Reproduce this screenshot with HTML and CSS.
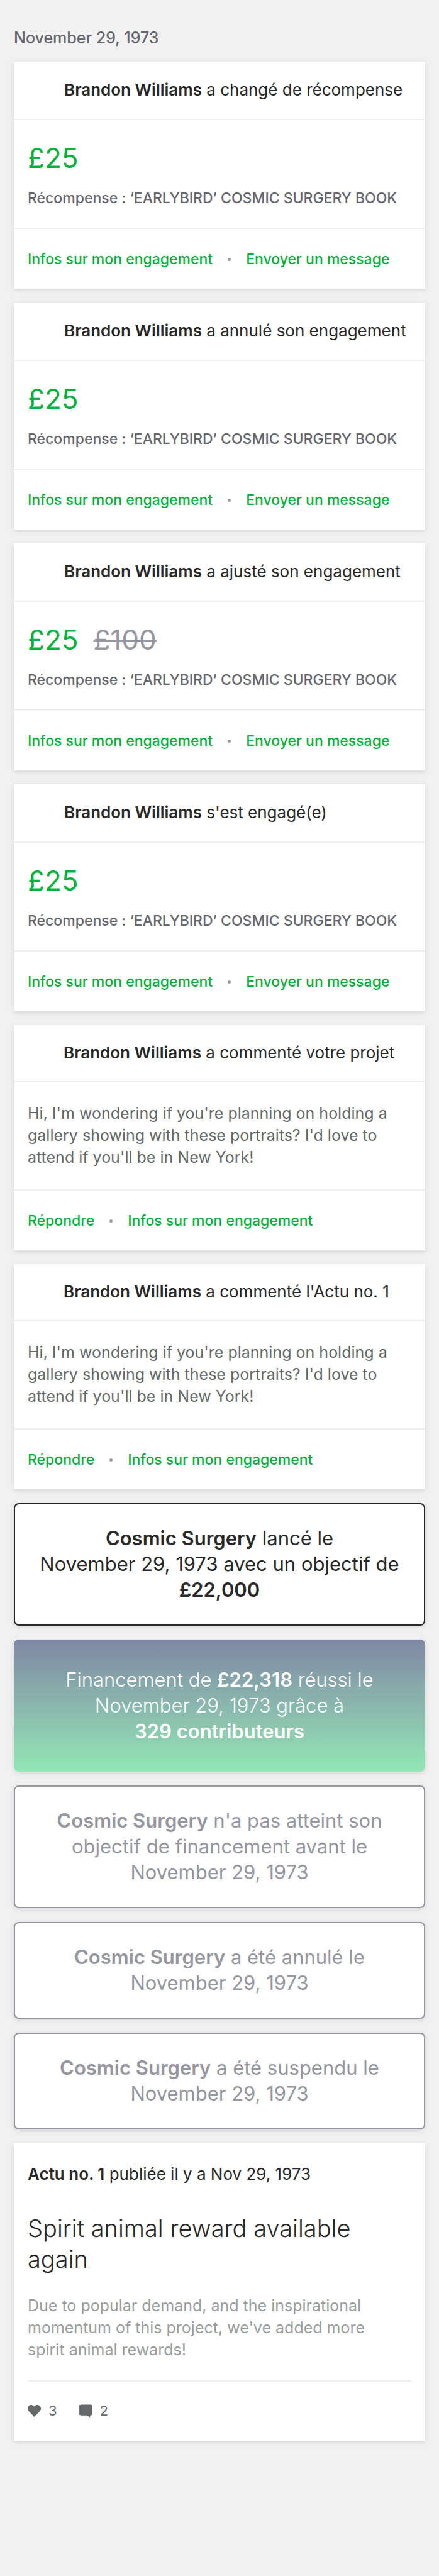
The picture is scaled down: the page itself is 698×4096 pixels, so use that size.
FILE: index.html
```html
<!DOCTYPE html>
<html lang="fr">
<head>
<meta charset="utf-8">
<meta name="viewport" content="width=device-width, initial-scale=1">
<title>Activité du projet</title>
<link rel="stylesheet" href="styles.css">
</head>
<body>
<main class="feed">
  <h1 class="feed-date">November 29, 1973</h1>

  <article class="card">
    <h2 class="card-header"><strong>Brandon Williams</strong> a changé de récompense</h2>
    <div class="pledge">
      <p class="amounts"><span class="amount">£25</span></p>
      <p class="reward">Récompense : ‘EARLYBIRD’ COSMIC SURGERY BOOK</p>
    </div>
    <footer class="card-footer">
      <a class="action" href="#">Infos sur mon engagement</a><span class="dot"></span><a class="action" href="#">Envoyer un message</a>
    </footer>
  </article>

  <article class="card">
    <h2 class="card-header"><strong>Brandon Williams</strong> a annulé son engagement</h2>
    <div class="pledge">
      <p class="amounts"><span class="amount">£25</span></p>
      <p class="reward">Récompense : ‘EARLYBIRD’ COSMIC SURGERY BOOK</p>
    </div>
    <footer class="card-footer">
      <a class="action" href="#">Infos sur mon engagement</a><span class="dot"></span><a class="action" href="#">Envoyer un message</a>
    </footer>
  </article>

  <article class="card">
    <h2 class="card-header"><strong>Brandon Williams</strong> a ajusté son engagement</h2>
    <div class="pledge">
      <p class="amounts"><span class="amount">£25</span><del class="amount old">£100</del></p>
      <p class="reward">Récompense : ‘EARLYBIRD’ COSMIC SURGERY BOOK</p>
    </div>
    <footer class="card-footer">
      <a class="action" href="#">Infos sur mon engagement</a><span class="dot"></span><a class="action" href="#">Envoyer un message</a>
    </footer>
  </article>

  <article class="card">
    <h2 class="card-header"><strong>Brandon Williams</strong> s'est engagé(e)</h2>
    <div class="pledge">
      <p class="amounts"><span class="amount">£25</span></p>
      <p class="reward">Récompense : ‘EARLYBIRD’ COSMIC SURGERY BOOK</p>
    </div>
    <footer class="card-footer">
      <a class="action" href="#">Infos sur mon engagement</a><span class="dot"></span><a class="action" href="#">Envoyer un message</a>
    </footer>
  </article>

  <article class="card">
    <h2 class="card-header compact"><strong>Brandon Williams</strong> a commenté votre projet</h2>
    <p class="comment">Hi, I'm wondering if you're planning on holding a gallery showing with these portraits? I'd love to attend if you'll be in New York!</p>
    <footer class="card-footer">
      <a class="action" href="#">Répondre</a><span class="dot"></span><a class="action" href="#">Infos sur mon engagement</a>
    </footer>
  </article>

  <article class="card">
    <h2 class="card-header compact"><strong>Brandon Williams</strong> a commenté l'Actu no. 1</h2>
    <p class="comment">Hi, I'm wondering if you're planning on holding a gallery showing with these portraits? I'd love to attend if you'll be in New York!</p>
    <footer class="card-footer">
      <a class="action" href="#">Répondre</a><span class="dot"></span><a class="action" href="#">Infos sur mon engagement</a>
    </footer>
  </article>

  <p class="milestone launch"><strong>Cosmic Surgery</strong> lancé le<br>November 29, 1973 avec un objectif de<br><strong>£22,000</strong></p>
  <p class="milestone success">Financement de <strong>£22,318</strong> réussi le<br>November 29, 1973 grâce à<br><strong>329 contributeurs</strong></p>
  <p class="milestone"><strong>Cosmic Surgery</strong> n'a pas atteint son<br>objectif de financement avant le<br>November 29, 1973</p>
  <p class="milestone"><strong>Cosmic Surgery</strong> a été annulé le<br>November 29, 1973</p>
  <p class="milestone"><strong>Cosmic Surgery</strong> a été suspendu le<br>November 29, 1973</p>

  <article class="card update">
    <p class="update-meta"><strong>Actu no. 1</strong> publiée il y a Nov 29, 1973</p>
    <h2 class="update-title">Spirit animal reward available again</h2>
    <p class="update-body">Due to popular demand, and the inspirational<br>momentum of this project, we've added more<br>spirit animal rewards!</p>
    <footer class="stats">
      <span class="stat">
        <svg class="icon" viewBox="0 0 22 22" role="img" aria-label="J'aime"><path d="M11 21 1.800 11.600C-.6 9-.6 5.200 1.700 2.900 4 .5 7.900.5 10.100 2.900L11 4l.9-1.100c2.200-2.400 6.100-2.400 8.400 0 2.300 2.300 2.300 6.100-.1 8.700z"/></svg>3
      </span>
      <span class="stat">
        <svg class="icon" viewBox="0 0 22 22" role="img" aria-label="Commentaires"><path d="M3 .5h16a3 3 0 0 1 3 3V15.500a3 3 0 0 1-3 3h-1V22l-4.600-3.500H3a3 3 0 0 1-3-3V3.500a3 3 0 0 1 3-3z"/></svg>2
      </span>
    </footer>
  </article>
</main>
</body>
</html>
```

FILE: styles.css
```css
* {
  box-sizing: border-box;
}

body {
  margin: 0;
  background: #f1f1f1;
  color: #282828;
  font-family: Inter, "Liberation Sans", sans-serif;
  font-size: 26px;
  line-height: 32px;
}

h1,
h2,
p {
  margin: 0;
  font-weight: 400;
}

strong {
  font-weight: 600;
}

.feed {
  display: flex;
  flex-direction: column;
  gap: 22px;
  padding: 44px 22px;
}

.feed-date {
  color: #66666e;
  font-size: 25px;
  font-weight: 500;
}

.card {
  background: #fff;
  box-shadow: 0 2px 8px rgba(0, 0, 0, 0.12);
}

.card-header {
  padding: 29px 22px 30px 80px;
  border-bottom: 2px solid #efeff4;
  font-size: 26px;
}

.card-header.compact {
  padding: 28px 22px 29px 79px;
}

.pledge {
  display: flex;
  flex-direction: column;
  gap: 24px;
  padding: 34px 22px 33px;
}

.amounts {
  display: flex;
  gap: 24px;
}

.amount {
  color: #05b03c;
  font-size: 44px;
  line-height: 52px;
}

.amount.old {
  color: #9696a0;
  text-decoration-thickness: 4px;
}

.reward {
  color: #66666e;
  font-size: 23px;
  font-weight: 500;
  line-height: 28px;
}

.comment {
  padding: 32px 22px 33px;
  color: #656868;
  font-size: 25px;
  line-height: 35px;
}

.card-footer {
  display: flex;
  align-items: center;
  gap: 24px;
  padding: 34px 22px 33px;
  border-top: 2px solid #efeff4;
}

.action {
  color: #05b03c;
  font-size: 23px;
  font-weight: 500;
  line-height: 28px;
  text-decoration: none;
}

.dot {
  width: 5px;
  height: 5px;
  border-radius: 50%;
  background: #9b9e9e;
}

.milestone {
  padding: 33px 32px 35px;
  border: 2px solid #96969f;
  border-radius: 8px;
  background: #fff;
  box-shadow: 0 2px 8px rgba(0, 0, 0, 0.12);
  color: #96969f;
  font-size: 31px;
  line-height: 41px;
  text-align: center;
}

.launch {
  border-color: #282828;
  color: #282828;
}

.success {
  padding: 43px 34px 44px;
  border: 0;
  background: linear-gradient(#8087a4, #93e7b5);
  color: #fff;
  font-weight: 300;
}

.update {
  padding: 33px 22px 34px;
}

.update-title {
  padding: 46px 0 32px;
  font-size: 38px;
  font-weight: 300;
  line-height: 49px;
}

.update-body {
  padding-bottom: 31px;
  border-bottom: 2px solid #efeff0;
  color: #9b9e9e;
  font-size: 25px;
  line-height: 35px;
}

.stats {
  display: flex;
  gap: 35px;
  padding-top: 32px;
  color: #66666e;
  font-size: 22px;
  line-height: 28px;
}

.stat {
  display: flex;
  align-items: center;
  gap: 12px;
}

.icon {
  width: 21px;
  height: 21px;
  fill: #656868;
}
```
